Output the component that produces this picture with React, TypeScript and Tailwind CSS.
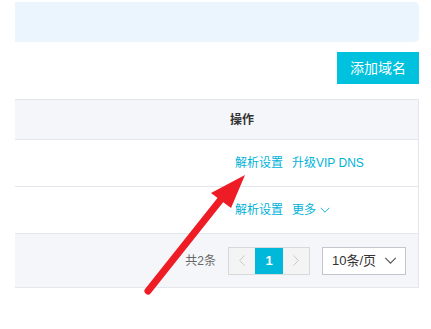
import React from 'react';

const ChevronDown = ({ className = '' }: { className?: string }) => (
  <svg className={className} viewBox="0 0 14 8" fill="none" stroke="currentColor" strokeWidth="1.3">
    <path d="M1 1l6 6 6-6" />
  </svg>
);

const App: React.FC = () => {
  return (
    <div
      className="relative w-[431px] h-[329px] bg-white overflow-hidden text-[12px] text-[#333]"
      style={{ fontFamily: '"Liberation Sans", "Noto Sans CJK SC", sans-serif' }}
    >
      <div className="ml-[15px] w-[404px] pt-[2px]">
        <div className="h-[40px] bg-[#eaf5fe] rounded-r-[5px]" />

        <div className="flex justify-end mt-[10px]">
          <button className="h-[32px] w-[82px] bg-[#00c1de] text-white text-[14px] leading-none">
            添加域名
          </button>
        </div>

        <div className="mt-[15px] border-t border-r border-b border-[#e3e7ec]">
          <div className="flex h-[40px] bg-[#f5f6f9] border-b border-[#e3e7ec]">
            <div className="flex-1" />
            <div className="w-[188px] flex items-center pl-[0px] font-bold text-[#333]">操作</div>
          </div>
          <div className="flex h-[47px] border-b border-[#e3e7ec]">
            <div className="flex-1" />
            <div className="w-[188px] flex items-center gap-[9px] pl-[5px] text-[#00b2d8]">
              <span>解析设置</span>
              <span>升级VIP DNS</span>
            </div>
          </div>
          <div className="flex h-[47px] border-b border-[#e3e7ec]">
            <div className="flex-1" />
            <div className="w-[188px] flex items-center gap-[9px] pl-[5px] text-[#00b2d8]">
              <span>解析设置</span>
              <span className="flex items-center gap-[4px]">
                更多
                <ChevronDown className="w-[10px] h-[6px]" />
              </span>
            </div>
          </div>
          <div className="flex items-center justify-end h-[53px] bg-[#f5f6f9] pr-[12px]">
            <span className="text-[#666] mr-[12px]">共2条</span>
            <div className="flex h-[28px] border border-[#d7d8d9]">
              <div className="w-[26px] flex items-center justify-center bg-[#f4f4f4] text-[#c8c8c8]">
                <svg className="w-[6px] h-[11px]" viewBox="0 0 6 11" fill="none" stroke="currentColor" strokeWidth="1">
                  <path d="M5.5 0.5L0.7 5.5l4.8 5" />
                </svg>
              </div>
              <div className="w-[28px] flex items-center justify-center bg-[#00b8d9] text-white font-bold text-[13px]">
                1
              </div>
              <div className="w-[26px] flex items-center justify-center bg-[#f4f4f4] text-[#c8c8c8]">
                <svg className="w-[6px] h-[11px]" viewBox="0 0 6 11" fill="none" stroke="currentColor" strokeWidth="1">
                  <path d="M0.5 0.5l4.8 5-4.8 5" />
                </svg>
              </div>
            </div>
            <div className="ml-[12px] w-[84px] h-[28px] border border-[#c4c6cf] bg-white flex items-center justify-between pl-[9px] pr-[8px] text-[13px] text-[#333]">
              <span>10条/页</span>
              <ChevronDown className="w-[13px] h-[7px] text-[#555]" />
            </div>
          </div>
        </div>
      </div>

      <svg className="absolute left-0 top-0 pointer-events-none" width="431" height="329" viewBox="0 0 431 329">
        <line x1="148" y1="291" x2="222" y2="198" stroke="#ee1c25" strokeWidth="7" strokeLinecap="round" />
        <polygon points="245,175 211,193 231,208" fill="#ee1c25" />
      </svg>
    </div>
  );
};

export default App;
